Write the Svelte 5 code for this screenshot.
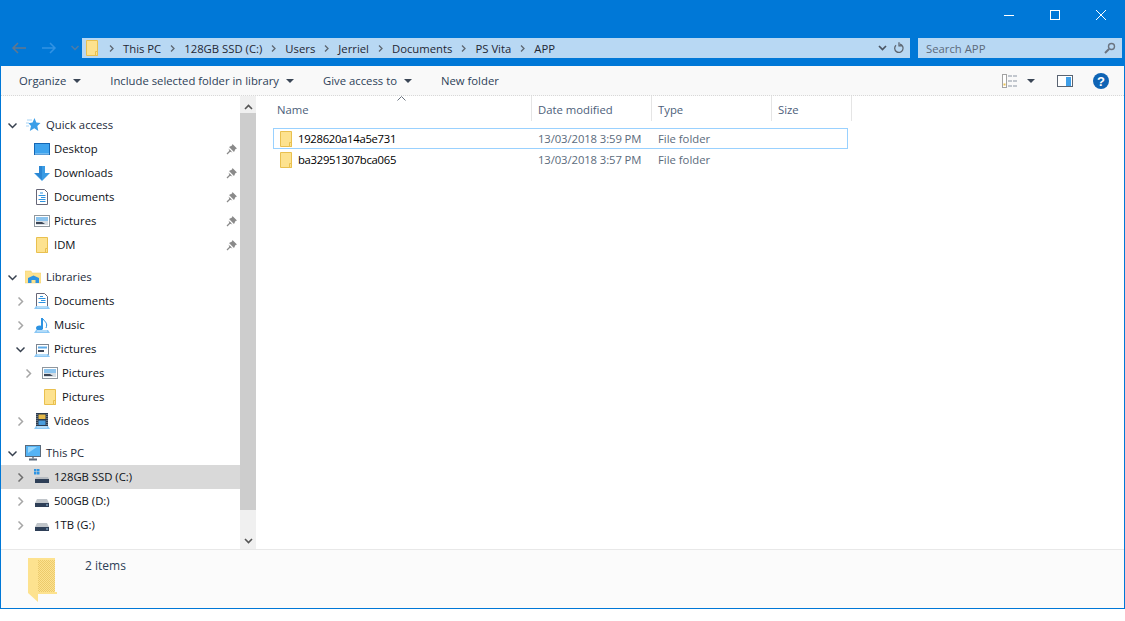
<script>
  // Explorer window, PS Vita\APP folder
  const crumbs = ['This PC', '128GB SSD (C:)', 'Users', 'Jerriel', 'Documents', 'PS Vita', 'APP'];
  const tools = ['Organize', 'Include selected folder in library', 'Give access to'];
  const columns = [
    { name: 'Name', w: 262 },
    { name: 'Date modified', w: 120 },
    { name: 'Type', w: 120 },
    { name: 'Size', w: 80 }
  ];
  const files = [
    { name: '1928620a14a5e731', date: '13/03/2018 3:59 PM', focus: true },
    { name: 'ba32951307bca065', date: '13/03/2018 3:57 PM', focus: false }
  ];
  const nav = [
    [
      { label: 'Quick access', icon: 'star', level: 0, arrow: 'open' },
      { label: 'Desktop', icon: 'desktop', level: 1, pin: true },
      { label: 'Downloads', icon: 'download', level: 1, pin: true },
      { label: 'Documents', icon: 'doc', level: 1, pin: true },
      { label: 'Pictures', icon: 'pic', level: 1, pin: true },
      { label: 'IDM', icon: 'folder', level: 1, pin: true }
    ],
    [
      { label: 'Libraries', icon: 'lib', level: 0, arrow: 'open' },
      { label: 'Documents', icon: 'libdoc', level: 1, arrow: 'closed' },
      { label: 'Music', icon: 'music', level: 1, arrow: 'closed' },
      { label: 'Pictures', icon: 'libpic', level: 1, arrow: 'open' },
      { label: 'Pictures', icon: 'pic', level: 2, arrow: 'closed' },
      { label: 'Pictures', icon: 'folder', level: 2 },
      { label: 'Videos', icon: 'video', level: 1, arrow: 'closed' }
    ],
    [
      { label: 'This PC', icon: 'pc', level: 0, arrow: 'open' },
      { label: '128GB SSD (C:)', icon: 'ssd', level: 1, arrow: 'closed', selected: true },
      { label: '500GB (D:)', icon: 'drive', level: 1, arrow: 'closed' },
      { label: '1TB (G:)', icon: 'drive', level: 1, arrow: 'closed' }
    ]
  ];
</script>

{#snippet folder()}
  <svg class="ico" width="16" height="16" viewBox="0 0 16 16">
    <path d="M2.500 .5H13.500V15.500H2.500Z" fill="#fde28f" stroke="#e9c04f" />
    <path d="M11.500 11.500V15.500H13.500V11.500Z" fill="#fde28f" stroke="#e9c04f" />
  </svg>
{/snippet}

{#snippet libBase()}
  <path d="M2 13H14L16 16H0Z" fill="#8cc8f5" />
  <path d="M3 14H13" stroke="#d8eefc" />
{/snippet}

{#snippet navIcon(name)}
  {#if name === 'folder'}
    {@render folder()}
  {:else}
    <svg class="ico" width="16" height="16" viewBox="0 0 16 16">
      {#if name === 'star'}
        <path d="M9.500 1L11.300 5.600 15.500 6 12.300 9 13.300 14 9.300 11.300 4.800 14 6 9 3.500 6.300 7.500 5.600Z" fill="#3a9ee8" />
        <path d="M2 3H7M1 6H4M1 9H4" stroke="#a8d4f5" />
      {:else if name === 'desktop'}
        <rect x=".5" y="2.500" width="15" height="11" fill="#3fa4ee" stroke="#1467b5" />
        <path d="M1 13H15" stroke="#a5d4f7" />
      {:else if name === 'download'}
        <path d="M5 1H11V8H16L8 16 0 8H5Z" fill="#3a9be4" />
        <path d="M5 1H8V15L1 8H5Z" fill="#2b86d3" />
      {:else if name === 'doc'}
        <path d="M2.500 .5H10.500L13.500 3.500V15.500H2.500Z" fill="#fff" stroke="#667" />
        <path d="M6 4H9M4.500 6.500H11.500M7 8.500H11.500M4.500 10.500H11.500M6 12.500H11.500" stroke="#2f93e0" />
      {:else if name === 'libdoc'}
        <path d="M2.500 .5H10.500L13.500 3.500V13.500H2.500Z" fill="#fff" stroke="#667" />
        <path d="M6 3.500H9M4.500 5.500H11.500M7 7.500H11.500M4.500 9.500H11.500" stroke="#2f93e0" />
        {@render libBase()}
      {:else if name === 'pic'}
        <rect x=".5" y="2.500" width="15" height="11" fill="#fff" stroke="#8f979e" />
        <rect x="2" y="4" width="12" height="4" fill="#8cc4ee" />
        <rect x="2" y="8" width="12" height="4" fill="#d6dde3" />
        <path d="M2 9H8L11 11H2Z" fill="#3c4656" />
      {:else if name === 'lib'}
        <path d="M0 2H6L7 4H16V14H0Z" fill="#fde28f" stroke="#f0cd6a" stroke-width=".5" />
        <path d="M3 14V9L8.500 6.500 14 9V14H10.500V11H6.500V14Z" fill="#2d93e2" />
      {:else if name === 'music'}
        <path d="M8 1V12" stroke="#2d93e2" stroke-width="2" />
        <ellipse cx="5.500" cy="11" rx="3.500" ry="2.500" fill="#2d93e2" />
        <path d="M9 2C11 5 14 6 12 11" stroke="#2d93e2" fill="none" />
        {@render libBase()}
      {:else if name === 'libpic'}
        <rect x="2.500" y="3.500" width="12" height="10" fill="#fff" stroke="#7d8691" />
        <path d="M4 6.500H13" stroke="#5ba9e6" stroke-width="2" />
        <path d="M4 10H10" stroke="#3c4656" stroke-width="2" />
        {@render libBase()}
      {:else if name === 'video'}
        <rect x="2" y="0" width="12" height="14" fill="#2c3a4e" />
        <rect x="4.500" y="1.500" width="7" height="4.500" fill="#e4b94a" />
        <rect x="4.500" y="7.500" width="7" height="4.500" fill="#4a9ddd" />
        <path d="M3 1V13M13 1V13" stroke="#9aa6b3" stroke-dasharray="1 1" />
        {@render libBase()}
      {:else if name === 'pc'}
        <rect x=".5" y=".5" width="15" height="11" fill="#54b4f5" stroke="#5b6b7c" />
        <path d="M3 2H12L3 8Z" fill="#9ad7fb" />
        <path d="M4 14.500H12" stroke="#5b6b7c" stroke-width="2" />
        <path d="M7 12H9V14H7Z" fill="#8a97a5" />
      {:else if name === 'ssd'}
        <rect x="0" y="0" width="2.500" height="2.500" fill="#2d93e2" />
        <rect x="3" y="0" width="2.500" height="2.500" fill="#2d93e2" />
        <rect x="0" y="3" width="2.500" height="2.500" fill="#2d93e2" />
        <rect x="3" y="3" width="2.500" height="2.500" fill="#2d93e2" />
        <path d="M2 8H14L15 10H1Z" fill="#b5bac0" />
        <rect x="1" y="10" width="14" height="4" fill="#2e3f57" />
      {:else if name === 'drive'}
        <path d="M3 6H13L15 10H1Z" fill="#c0c5ca" />
        <rect x="1" y="10" width="14" height="4" fill="#2e3f57" />
        <path d="M12 12H14" stroke="#9fc8e8" />
      {/if}
    </svg>
  {/if}
{/snippet}

{#snippet chevron(kind)}
  <svg class="chev" width="9" height="9" viewBox="0 0 9 9">
    {#if kind === 'open'}
      <path d="M.5 2.500L4.500 6.500 8.500 2.500" fill="none" stroke="#37404f" stroke-width="1.500" />
    {:else}
      <path d="M2.500 .5L6.500 4.500 2.500 8.500" fill="none" stroke={kind === 'sel' ? '#6e6e6e' : '#a6a6a6'} stroke-width="1.500" />
    {/if}
  </svg>
{/snippet}

{#snippet caret()}
  <svg class="caret" width="8" height="4" viewBox="0 0 8 4"><path d="M0 0H8L4 4Z" fill="#3b4656" /></svg>
{/snippet}

{#snippet pin()}
  <svg class="pin" width="11" height="11" viewBox="0 0 11 11">
    <path d="M6.500 0L11 4.500 9.500 5 8 8 3 3 6 1.500Z" fill="#8a8a8a" />
    <path d="M4.500 6.500L1 10" stroke="#8a8a8a" stroke-width="1.300" />
    <path d="M2.500 4.500L6.500 8.500 3.500 7.500Z" fill="#8a8a8a" />
  </svg>
{/snippet}

<div class="window">
  <header class="chrome">
    <div class="titlebar">
      <svg class="winbtn" width="12" height="12" viewBox="0 0 12 12"><path d="M1 6.500H11" stroke="#fff" /></svg>
      <svg class="winbtn" width="12" height="12" viewBox="0 0 12 12"><rect x="1.500" y="1.500" width="9" height="9" fill="none" stroke="#fff" /></svg>
      <svg class="winbtn" width="12" height="12" viewBox="0 0 12 12"><path d="M1 1L11 11M11 1L1 11" stroke="#fff" /></svg>
    </div>
    <div class="addressrow">
      <div class="navbtns">
        <svg width="16" height="12" viewBox="0 0 16 12"><path d="M7 1L2 6 7 11M2 6H15" fill="none" stroke="#62778e" stroke-width="1.500" /></svg>
        <svg width="16" height="12" viewBox="0 0 16 12"><path d="M9 1L14 6 9 11M14 6H1" fill="none" stroke="#3293e4" stroke-width="1.500" /></svg>
        <svg width="8" height="6" viewBox="0 0 8 6"><path d="M.5 1L4 4.500 7.500 1" fill="none" stroke="#4e7ba6" stroke-width="1.500" /></svg>
      </div>
      <div class="address">
        {@render folder()}
        {#each crumbs as c}
          <svg class="sep" width="5" height="7" viewBox="0 0 5 7"><path d="M1 .5L4 3.500 1 6.500" fill="none" stroke="#5d6671" stroke-width="1.300" /></svg>
          <span>{c}</span>
        {/each}
        <div class="addr-end">
          <svg width="9" height="6" viewBox="0 0 9 6"><path d="M1 1L4.500 4.500 8 1" fill="none" stroke="#4b5563" stroke-width="1.700" /></svg>
          <svg class="refresh" width="12" height="12" viewBox="0 0 12 12"><path d="M7 2.200A4.200 4.200 0 1 1 3 3.200M6 .2V3.800H9.200" fill="none" stroke="#5d6671" stroke-width="1.300" /></svg>
        </div>
      </div>
      <div class="search">
        <span>Search APP</span>
        <svg width="12" height="12" viewBox="0 0 12 12"><circle cx="7.500" cy="4.500" r="3" fill="none" stroke="#6b7480" stroke-width="1.400" /><path d="M5 7L1 11" stroke="#6b7480" stroke-width="2" /></svg>
      </div>
    </div>
  </header>

  <div class="toolbar">
    {#each tools as t}
      <button>{t}{@render caret()}</button>
    {/each}
    <button>New folder</button>
    <div class="tool-right">
      <svg width="16" height="14" viewBox="0 0 16 14">
        <rect x=".5" y=".5" width="4" height="13" fill="#fff" stroke="#a3a3a3" />
        <rect x="1.500" y="9.500" width="2" height="2" fill="#e9c04f" />
        <path d="M6 2H10M11 2H15M6 7H10M11 7H15M6 12H10M11 12H15" stroke="#8b95a3" />
      </svg>
      <svg width="8" height="4" viewBox="0 0 8 4"><path d="M0 0H8L4 4Z" fill="#3b4656" /></svg>
      <svg class="pane" width="16" height="12" viewBox="0 0 16 12">
        <rect x=".5" y=".5" width="15" height="11" fill="#fff" stroke="#5a6472" />
        <rect x="9" y="2" width="5" height="9" fill="#3f9fe8" />
      </svg>
      <svg class="help" width="16" height="16" viewBox="0 0 16 16">
        <circle cx="8" cy="8" r="8" fill="#0f64b5" />
        <text x="8" y="12.500" text-anchor="middle">?</text>
      </svg>
    </div>
  </div>

  <main class="body">
    <nav class="tree">
      {#each nav as group}
        <ul>
          {#each group as item}
            <li class="level{item.level}" class:selected={item.selected}>
              <span class="arrow">
                {#if item.arrow}{@render chevron(item.selected ? 'sel' : item.arrow)}{/if}
              </span>
              {@render navIcon(item.icon)}
              <span class="label">{item.label}</span>
              {#if item.pin}{@render pin()}{/if}
            </li>
          {/each}
        </ul>
      {/each}
    </nav>

    <div class="scrollbar">
      <svg width="9" height="6" viewBox="0 0 9 6"><path d="M1 5L4.500 1.500 8 5" fill="none" stroke="#555" stroke-width="1.600" /></svg>
      <div class="thumb"></div>
      <svg width="9" height="6" viewBox="0 0 9 6"><path d="M1 1L4.500 4.500 8 1" fill="none" stroke="#555" stroke-width="1.600" /></svg>
    </div>

    <section class="files">
      <div class="headers">
        {#each columns as col}
          <div class="col" style="width: {col.w}px">{col.name}</div>
        {/each}
        <svg class="sort" width="9" height="5" viewBox="0 0 9 5"><path d="M.5 4.500L4.500 .5 8.500 4.500" fill="none" stroke="#6b7480" /></svg>
      </div>
      <div class="rows">
        {#each files as f}
          <div class="row" class:focus={f.focus}>
            <div class="c-name">{@render folder()}<span>{f.name}</span></div>
            <div class="c-date">{f.date}</div>
            <div class="c-type">File folder</div>
          </div>
        {/each}
      </div>
    </section>
  </main>

  <footer class="status">
    <svg width="32" height="46" viewBox="0 0 32 46">
      <defs>
        <pattern id="dither" width="2" height="2" patternUnits="userSpaceOnUse">
          <rect width="2" height="2" fill="#fde28f" />
          <rect width="1" height="1" fill="#ecca6c" />
          <rect x="1" y="1" width="1" height="1" fill="#ecca6c" />
        </pattern>
      </defs>
      <path d="M0 0H27V34H29V36H10V44L0 35Z" fill="#fde28f" />
      <rect x="10" y="2" width="17" height="32" fill="url(#dither)" />
    </svg>
    <span>2 items</span>
  </footer>
</div>

<style>
  :global(body) {
    margin: 0;
    background: #fff;
  }
  .window {
    width: 1125px;
    height: 609px;
    box-sizing: border-box;
    border: solid #0078d7;
    border-width: 0 1px 1px 1px;
    display: flex;
    flex-direction: column;
    font-family: "Open Sans", "Liberation Sans", sans-serif;
    font-size: 11.3px;
    color: #000;
    overflow: hidden;
  }
  svg {
    display: block;
    flex: none;
  }
  .chrome {
    background: #0078d7;
    height: 66px;
    flex: none;
  }
  .titlebar {
    height: 37px;
    display: flex;
    justify-content: flex-end;
    align-items: center;
    gap: 34px;
    padding: 0 17px 8px 0;
    box-sizing: border-box;
  }
  .addressrow {
    display: flex;
    align-items: center;
    height: 22px;
    padding-right: 2px;
  }
  .navbtns {
    width: 81px;
    display: flex;
    align-items: center;
    gap: 14px;
    padding-left: 10px;
    box-sizing: border-box;
  }
  .address {
    width: 828px;
    height: 20px;
    background: #b8d8f3;
    display: flex;
    align-items: center;
    padding-left: 2px;
    box-sizing: border-box;
    color: #1f2733;
    white-space: nowrap;
  }
  .sep {
    margin: 0 9px;
  }
  .address .sep:first-of-type {
    margin-left: 5.500px;
  }
  .addr-end {
    margin-left: auto;
    display: flex;
    align-items: center;
    gap: 6px;
    padding-right: 5px;
  }
  .search {
    margin-left: 8px;
    width: 204px;
    height: 20px;
    background: #b8d8f3;
    display: flex;
    align-items: center;
    justify-content: space-between;
    padding: 0 6px 0 8px;
    box-sizing: border-box;
    color: #5c6a7b;
  }
  .toolbar {
    height: 30px;
    flex: none;
    background: #f9f9f9;
    border-bottom: 1px dotted #d8d8d8;
    display: flex;
    align-items: center;
    padding-left: 18px;
    box-sizing: border-box;
  }
  .toolbar button {
    all: unset;
    display: flex;
    align-items: center;
    gap: 7px;
    margin-right: 29px;
    color: #2d3f58;
  }
  .tool-right {
    margin-left: auto;
    display: flex;
    align-items: center;
    padding-right: 15px;
  }
  .tool-right svg:nth-child(2) {
    margin-left: 9px;
  }
  .pane {
    margin-left: 22px;
  }
  .help {
    margin-left: 20px;
  }
  .help text {
    fill: #fff;
    font-size: 13px;
    font-weight: 700;
    font-family: "Liberation Sans", sans-serif;
  }
  .body {
    flex: 1;
    display: flex;
    min-height: 0;
  }
  .tree {
    width: 239px;
    flex: none;
    padding-top: 17px;
    box-sizing: border-box;
  }
  .tree ul {
    list-style: none;
    margin: 0 0 8px;
    padding: 0;
  }
  .tree li {
    height: 24px;
    display: flex;
    align-items: center;
    position: relative;
    white-space: nowrap;
  }
  .tree li.selected {
    background: #d9d9d9;
  }
  .arrow {
    width: 9px;
    flex: none;
  }
  .level0 {
    padding-left: 7px;
  }
  .level1 {
    padding-left: 15px;
  }
  .level2 {
    padding-left: 23px;
  }
  .tree :global(.ico) {
    margin-left: 8px;
  }
  .label {
    margin-left: 5px;
    margin-top: -2px;
    color: #0d1117;
  }
  .level1 .label,
  .level2 .label {
    margin-left: 4px;
  }
  .level0 .label {
    color: #1d2a3a;
  }
  .level1 :global(.ico),
  .level2 :global(.ico) {
    margin-left: 9px;
  }
  .pin {
    position: absolute;
    left: 225px;
    top: 7px;
  }
  .scrollbar {
    width: 16px;
    flex: none;
    background: #f0f0f0;
    display: flex;
    flex-direction: column;
    align-items: center;
    padding: 8px 0 5px;
    box-sizing: border-box;
  }
  .thumb {
    width: 16px;
    height: 397px;
    margin: 3px 0 auto;
    background: #cdcdcd;
  }
  .files {
    flex: 1;
    min-width: 0;
  }
  .headers {
    display: flex;
    height: 25px;
    padding-left: 14px;
    position: relative;
  }
  .col {
    box-sizing: border-box;
    padding: 6px 0 0 7px;
    border-right: 1px solid #e5e5e5;
    color: #4c607a;
  }
  .col + .col {
    padding-left: 6px;
  }
  .sort {
    position: absolute;
    left: 141px;
    top: 0;
  }
  .rows {
    margin: 7px 0 0 17px;
    width: 575px;
  }
  .row {
    height: 21px;
    box-sizing: border-box;
    border: 1px solid transparent;
    display: flex;
    align-items: center;
    color: #5b6b7c;
  }
  .row.focus {
    border-color: #99d1ff;
  }
  .c-name {
    width: 264px;
    display: flex;
    align-items: center;
    gap: 4px;
    padding-left: 4px;
    box-sizing: border-box;
    color: #000;
    letter-spacing: -0.3px;
  }
  .c-date {
    width: 120px;
    letter-spacing: -0.1px;
  }
  .status {
    height: 59px;
    flex: none;
    background: #fbfbfb;
    border-top: 1px solid #e8e8e8;
    display: flex;
    align-items: flex-start;
    padding: 8px 0 0 27px;
    box-sizing: border-box;
    color: #2d3f58;
    font-size: 12px;
  }
  .status span {
    margin: -1px 0 0 25px;
  }
</style>
